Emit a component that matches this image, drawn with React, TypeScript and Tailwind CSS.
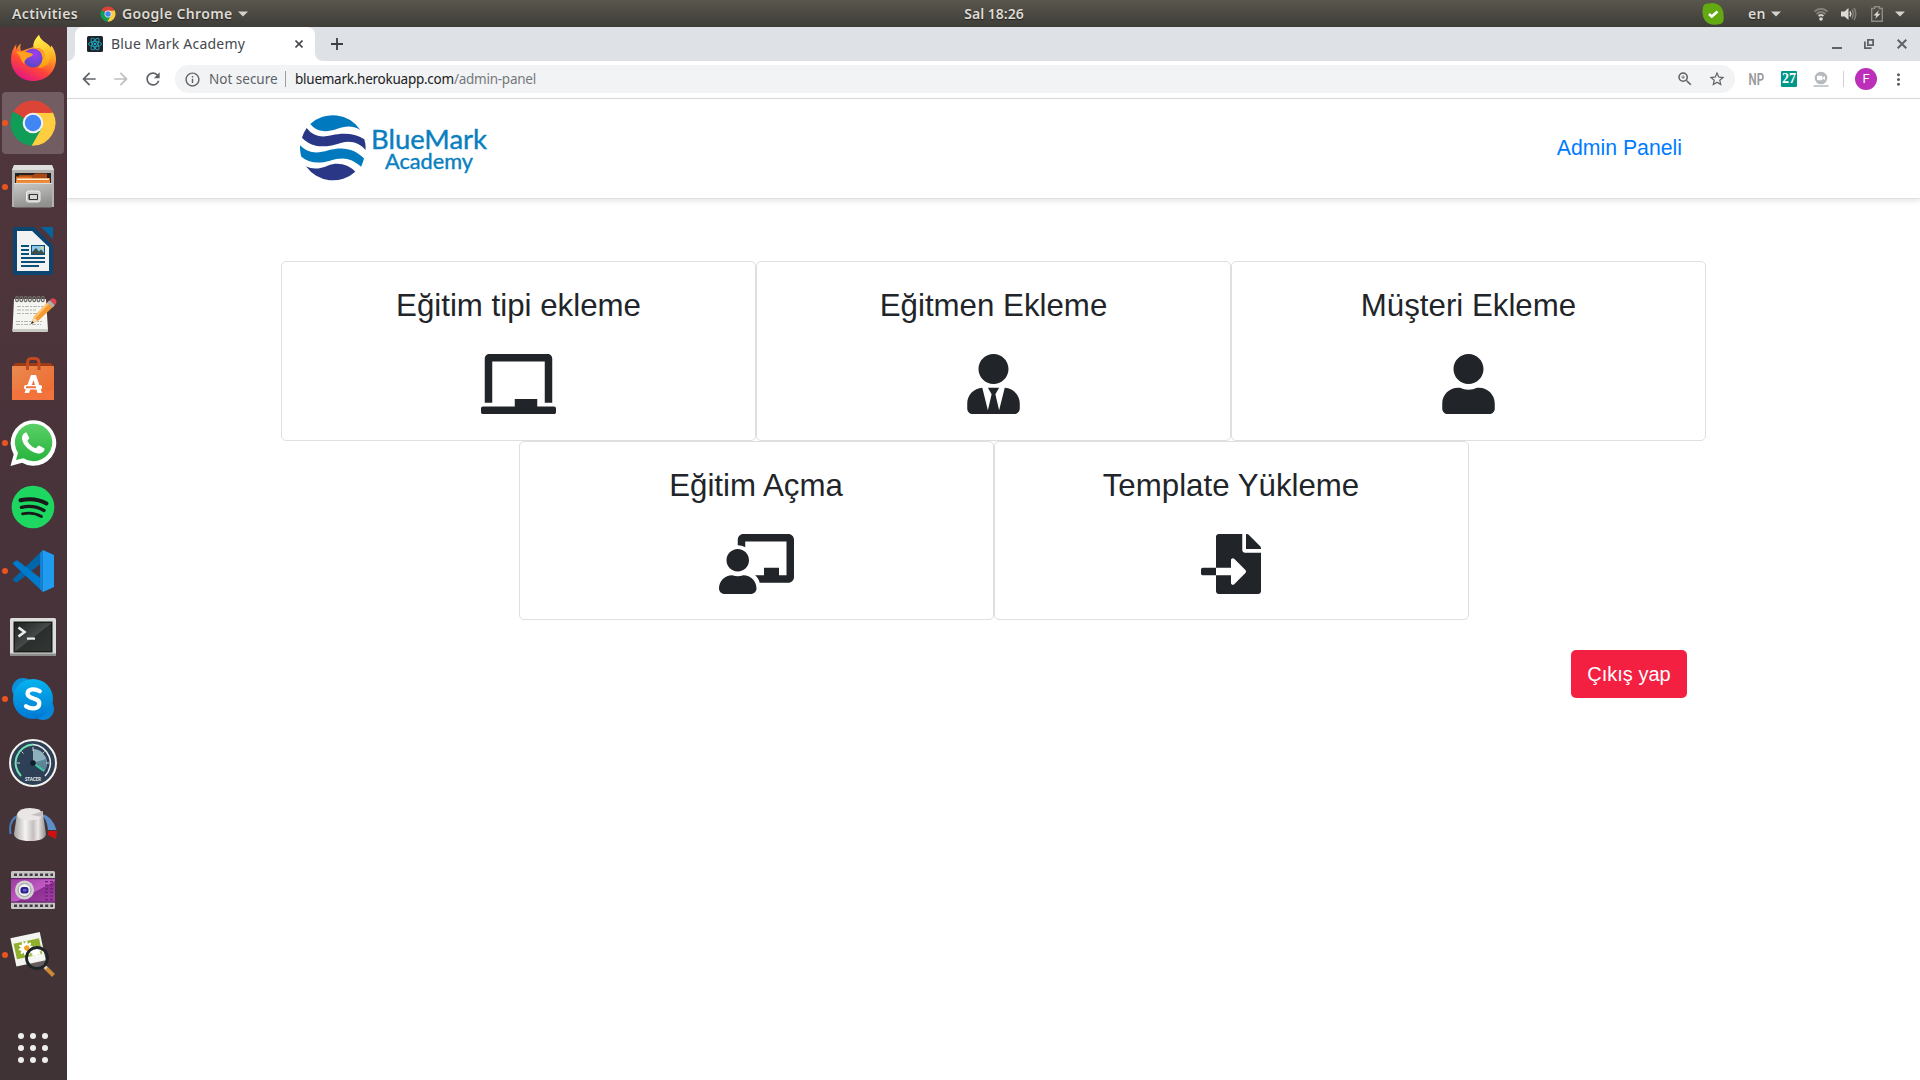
import React from "react";
import { FaChalkboard, FaUserTie, FaUser, FaChalkboardTeacher, FaFileImport } from "react-icons/fa";
import { MdArrowBack, MdArrowForward, MdRefresh, MdInfoOutline, MdZoomIn, MdStarBorder, MdMoreVert } from "react-icons/md";

const ChromeLogo = ({ className }: { className: string }) => (
  <svg viewBox="0 0 48 48" className={className}>
    <path d="M24 24 L4.5 12.7 A22.5 22.5 0 0 1 43.5 13 Z" fill="#db4437" />
    <path d="M24 24 L43.5 13 A22.5 22.5 0 0 1 23 46.5 Z" fill="#ffcd40" />
    <path d="M24 24 L23 46.5 A22.5 22.5 0 0 1 4.5 12.7 Z" fill="#0f9d58" />
    <path d="M24 13.7 H43.8 L45 17 L24 24Z" fill="#ffcd40" />
    <path d="M24 13.7 H43.8 L41 9.5 L12 8 L14 20Z" fill="#db4437" />
    <path d="M33 29 L23 46.5 L16 45 L18 29Z" fill="#0f9d58" />
    <path d="M33 29 L23 46.5 L30 45.8 L42 34 L40 16Z" fill="#ffcd40" />
    <path d="M15 29.5 L4.8 12.5 L2 18 L3 32 L17 34Z" fill="#0f9d58" />
    <circle cx="24" cy="24" r="10.3" fill="#f1f1f1" />
    <circle cx="24" cy="24" r="8.2" fill="#4285f4" />
  </svg>
);

const Firefox = () => (
  <>
    <defs>
      <linearGradient id="ffo" x1="0.8" y1="0" x2="0.3" y2="1">
        <stop offset="0" stopColor="#fff44f" />
        <stop offset="0.35" stopColor="#ffa422" />
        <stop offset="0.68" stopColor="#ff4538" />
        <stop offset="1" stopColor="#e31587" />
      </linearGradient>
      <linearGradient id="ffy" x1="0.5" y1="0" x2="0.6" y2="1">
        <stop offset="0" stopColor="#fff44f" />
        <stop offset="1" stopColor="#ff980e" />
      </linearGradient>
      <radialGradient id="ffp" cx="0.6" cy="0.3" r="0.8">
        <stop offset="0" stopColor="#a13df0" />
        <stop offset="1" stopColor="#4a4bbd" />
      </radialGradient>
    </defs>
    <path d="M30 0 C26 4 24 8 24.5 12 L12 16 C11 13 11 11 12 8.500 C9.500 10 8.500 12 7.500 14.500 C7 13 7 11 7.500 9 C4 13 2 18 2 24 C2 37 12 46 24 46 C37 46 47 37 47 24 C47 19 45 13 42 10.500 L42 13 C40 8 31 6 30 0Z" fill="url(#ffo)" />
    <path d="M30 0 C26 4 24 8 24.500 12 C34 15 37 25 29 33 C40 33 43 25 42 13 C38 8 31 6 30 0Z" fill="url(#ffy)" />
    <circle cx="24" cy="23" r="9.500" fill="url(#ffp)" />
    <path d="M7 17 C12 15 19 17 24 19 C23 22 20 22 18 23 C17 25 15 25 15.500 29 C11 26 13 22 7 17Z" fill="#ffa021" />
    <path d="M24.500 13.500 C29 13 35 17 34 25 C39 20 34 11 24.500 13.500Z" fill="#ff9a22" />
  </>
);

const Files = () => (
  <>
    <defs>
      <linearGradient id="fl" x1="0" y1="0" x2="0.3" y2="1">
        <stop offset="0" stopColor="#c9c9c7" />
        <stop offset="1" stopColor="#91918f" />
      </linearGradient>
    </defs>
    <path d="M5 2 H43 L45 7 V44 H3 V7Z" fill="#b3b2b0" />
    <path d="M5 2 H43 L45 7 H3Z" fill="#dededc" />
    <rect x="6" y="10" width="36" height="12" fill="#26211d" />
    <path d="M10 12 H24 L26 10.500 H38 V22 H10Z" fill="#a94a16" />
    <path d="M7 13.500 H22 L24 15 H41 V22 H7Z" fill="#e06c1f" />
    <rect x="8" y="15.500" width="32" height="1.500" fill="#fff0d8" />
    <rect x="7" y="17.500" width="34" height="4" fill="#ee8d3c" />
    <rect x="5" y="20" width="38" height="24.500" rx="1" fill="url(#fl)" />
    <rect x="5" y="20" width="38" height="1" fill="#dcdcda" />
    <rect x="17.500" y="28" width="13.500" height="11" rx="2" fill="#cfcfcd" stroke="#eee" />
    <rect x="19.500" y="31" width="9.500" height="6" rx="1" fill="#333" />
    <rect x="21" y="32" width="7" height="4" fill="#d7d7d7" />
  </>
);

const Writer = () => (
  <>
    <path d="M6 0 H25 L44 19 V46 Q44 48 42 48 H6 Q4 48 4 46 V2 Q4 0 6 0Z" fill="#0c4670" />
    <path d="M32 0 H44 V12Z" fill="#04649c" />
    <path d="M8 4 H24 L40 19 V44 H8Z" fill="#f2f2f2" />
    <path d="M25 0 L44 19 V24 L22 3Z" fill="#0c4670" />
    <g fill="#0b5079">
      <rect x="12" y="18" width="8" height="2" />
      <rect x="12" y="22" width="8" height="2" />
      <rect x="12" y="26" width="8" height="2" />
      <rect x="12" y="30" width="24" height="2" />
      <rect x="12" y="34" width="24" height="2" />
      <rect x="12" y="38" width="18" height="2" />
      <rect x="22" y="18" width="14" height="10" />
    </g>
    <rect x="23" y="19" width="12" height="8" fill="#8cc8ee" />
    <path d="M23 27 V25 L27 21 L30 24.500 L32 22.500 L35 26 V27Z" fill="#3d4f4a" />
    <circle cx="33" cy="21" r="1.200" fill="#f5e13c" />
  </>
);

const Notes = () => (
  <>
    <path d="M5 8 H37 L39 39 Q39 41 37 41 H5 Q3 41 3.500 39Z" fill="#f4f4f0" />
    <path d="M3.500 38 H39 V40 Q39 41 37 41 H5 Q3.500 41 3.500 40Z" fill="#c9cac3" />
    <g stroke="#b0b0aa" strokeWidth="0.900" strokeDasharray="4 1 2 1">
      <path d="M8 15.500 H34" /><path d="M8 19 H27" /><path d="M8 22.500 H30" /><path d="M7 30.500 H33" /><path d="M7 33.500 H32" />
    </g>
    <g fill="none" stroke="#6c6c68" strokeWidth="1.200">
      {[8, 12.300, 16.600, 20.900, 25.200, 29.500, 33.800].map((x) => (
        <ellipse key={x} cx={x} cy="8" rx="1.400" ry="2.600" />
      ))}
    </g>
    <path d="M22 33 L24.500 26 L40 10 L45 15 L29 30Z" fill="#f39a32" />
    <path d="M24.500 26 L40 10 L41.500 11.500 L26 27.500Z" fill="#ffc36a" />
    <path d="M22 33 L24.500 26 L29 30Z" fill="#f1d9ad" />
    <path d="M22 33 L23 30 L25 31.800Z" fill="#222" />
    <path d="M38.500 11.500 L41 9 L46 14 L43.500 16.500Z" fill="#a9adb0" />
    <path d="M41 9 Q43 6 46 8 Q49 10.500 46 14Z" fill="#e0454d" />
  </>
);

const Software = () => (
  <>
    <defs>
      <linearGradient id="sw" x1="0" y1="0" x2="1" y2="1">
        <stop offset="0" stopColor="#e98a50" />
        <stop offset="1" stopColor="#f0672c" />
      </linearGradient>
    </defs>
    <path d="M6 8 H42 L45 12 H3Z" fill="#9c3b16" />
    <rect x="3" y="11" width="42" height="34" fill="url(#sw)" />
    <rect x="3" y="35" width="42" height="10" fill="#f2743c" />
    <path d="M18.500 15 V8 Q18.500 3.500 22.500 3.500 H26 Q30 3.500 30 8 V15" fill="none" stroke="#c4491f" strokeWidth="3" />
    <path d="M22 20 H27 L33 38 H28.500 L24.500 25 L20 38 H15.500Z" fill="#fff" />
    <rect x="15" y="30" width="18" height="4.500" rx="2" fill="#fff" />
    <rect x="17" y="31.200" width="10" height="2" rx="0.500" fill="#ee7340" />
  </>
);

const Whatsapp = () => (
  <>
    <defs>
      <linearGradient id="wa" x1="0" y1="0" x2="0" y2="1">
        <stop offset="0" stopColor="#5bd066" />
        <stop offset="1" stopColor="#27b43e" />
      </linearGradient>
    </defs>
    <path d="M1.500 47 L4.700 35.500 A22.800 22.800 0 1 1 13 43.800Z" fill="#fff" />
    <path d="M7 41 L9 33.800 A18.700 18.700 0 1 1 14.500 39.200Z" fill="url(#wa)" />
    <path d="M17.500 13.500 C16 13 13 15.500 13 19 C13 26 23 34.500 30 34.500 C33 34.500 36 32 35.500 29.500 L30 26.500 C29 26.500 27.500 29.500 26.500 29.200 C23.500 28.500 19 24 18.500 22 C18.500 21 20.500 20 20.300 19Z" fill="#fff" />
  </>
);

const Spotify = () => (
  <>
    <circle cx="24" cy="24" r="21.300" fill="#1ed760" />
    <g fill="none" stroke="#17191a" strokeLinecap="round">
      <path d="M11.500 17.300 Q26 14 37.500 20.500" strokeWidth="4" />
      <path d="M12.500 24.300 Q25 21.500 35 27.500" strokeWidth="3.400" />
      <path d="M13.500 30.800 Q24 28.500 32.500 33.500" strokeWidth="2.800" />
    </g>
  </>
);

const VSCode = () => (
  <>
    <path d="M3.500 32.500 L34 3 V15 L8.500 35 Q6 36 3.500 32.500Z" fill="#0065a9" />
    <path d="M3.500 16.500 Q6 13 8.500 13.500 L34 33 V45 L3.500 16.500Z" fill="#007acc" />
    <path d="M34 3 L45 8 V40 L34 45 Z" fill="#1f9cf0" />
    <path d="M34 3 L31 6 V42 L34 45Z" fill="#1580d0" />
  </>
);

const Terminal = () => (
  <>
    <defs>
      <linearGradient id="tm" x1="0" y1="0" x2="1" y2="1">
        <stop offset="0" stopColor="#1e2321" />
        <stop offset="0.5" stopColor="#464a48" />
        <stop offset="0.52" stopColor="#2a2e2c" />
        <stop offset="1" stopColor="#323634" />
      </linearGradient>
    </defs>
    <rect x="1" y="7" width="46" height="38" rx="1.500" fill="#dcdcda" />
    <rect x="1" y="42.500" width="46" height="2.500" fill="#8d8d8b" />
    <rect x="4.500" y="10.500" width="39" height="31" fill="#191c1b" />
    <rect x="6" y="12" width="36" height="28" fill="url(#tm)" />
    <path d="M9.500 16.500 L15.500 21 L9.500 25.500" fill="none" stroke="#eee" strokeWidth="2.600" />
    <rect x="18" y="26.500" width="8" height="2.200" fill="#eee" />
  </>
);

const Skype = () => (
  <>
    <defs>
      <linearGradient id="sk" x1="0" y1="0" x2="0" y2="1">
        <stop offset="0" stopColor="#06b4ee" />
        <stop offset="1" stopColor="#0078d4" />
      </linearGradient>
    </defs>
    <circle cx="14" cy="14" r="11" fill="#0c8fd9" />
    <circle cx="34" cy="34" r="11" fill="#0b86d8" />
    <circle cx="24" cy="24" r="20" fill="url(#sk)" />
    <path d="M30.800 16.200 C26 13.300 19 13.500 18.500 18.300 C18.300 25 31 22 30.300 28.700 C29.800 34.500 21.500 34.300 17 31.200" fill="none" stroke="#fff" strokeWidth="4.200" strokeLinecap="round" />
  </>
);

const Stacer = () => (
  <>
    <circle cx="24" cy="24" r="23" fill="#2d4055" stroke="#f3f3f0" strokeWidth="2" />
    <path d="M24 24 V10 A14 14 0 0 1 35 32.500Z" fill="#8fb0bd" />
    <path d="M24 24 L37 20 A14 14 0 0 1 35 32.500Z" fill="#5d8598" />
    <path d="M12 37 A18.500 18.500 0 0 1 24 5.500" fill="none" stroke="#73e0b4" strokeWidth="2" />
    <path d="M24 5.500 A18.500 18.500 0 0 1 36 37" fill="none" stroke="#e9edf0" strokeWidth="1.600" />
    <path d="M24 24 L35 32" stroke="#3cc9a4" strokeWidth="2" />
    <g stroke="#cdd6dc" strokeWidth="1">
      <path d="M24 8 V12" /><path d="M8 24 H11" /><path d="M37 24 H40" /><path d="M12.500 12.500 L14.500 14.500" /><path d="M35.500 12.500 L33.500 14.500" />
    </g>
    <circle cx="24" cy="24" r="2.800" fill="#101d2d" />
    <text x="24" y="41.500" fontSize="4.500" fontWeight="700" fill="#e5e8ea" textAnchor="middle" textLength="16" fontFamily="Open Sans">STACER</text>
  </>
);

const Knob = () => (
  <>
    <defs>
      <linearGradient id="kn" x1="0" y1="0" x2="1" y2="0">
        <stop offset="0" stopColor="#a5a3a2" />
        <stop offset="0.35" stopColor="#f6f4f3" />
        <stop offset="0.6" stopColor="#c4bfbe" />
        <stop offset="0.75" stopColor="#eeeae9" />
        <stop offset="1" stopColor="#8d8988" />
      </linearGradient>
    </defs>
    <path d="M1.500 31 Q-1 17 10 12" fill="none" stroke="#4b7dbb" strokeWidth="2" />
    <path d="M33 11 Q43 13 47.500 27 L39 27 Q38 16 33 13Z" fill="#5c8fca" />
    <path d="M39 28 L48 28 L47 36 L39 32Z" fill="#cf1010" />
    <path d="M8 11 Q10 5 21 5 Q32 5 34 11 L37 31 Q36 38 21 38 Q6 38 5 31Z" fill="url(#kn)" />
    <ellipse cx="21" cy="11.500" rx="12.500" ry="6" fill="#e9e6e5" />
    <path d="M22 12 L34 8 L34 14Z" fill="#c3bfbe" />
  </>
);

const Film = () => (
  <>
    <defs>
      <linearGradient id="fm" x1="0" y1="0" x2="1" y2="1">
        <stop offset="0" stopColor="#9b3ba0" />
        <stop offset="0.55" stopColor="#c25ac5" />
        <stop offset="0.56" stopColor="#8c2f93" />
        <stop offset="1" stopColor="#a43fa9" />
      </linearGradient>
    </defs>
    <rect x="2" y="4" width="44" height="38" rx="1.500" fill="#c6c6c4" />
    <rect x="2" y="11.500" width="44" height="23.500" fill="url(#fm)" />
    <rect x="2" y="11" width="44" height="1.200" fill="#5e2264" />
    <rect x="2" y="34.500" width="44" height="1.200" fill="#5e2264" />
    <path d="M5 7.800 H44" stroke="#413942" strokeWidth="2.400" strokeDasharray="3 2.200" />
    <path d="M5 38.800 H44" stroke="#413942" strokeWidth="2.400" strokeDasharray="3 2.200" />
    <circle cx="15.500" cy="23" r="9.500" fill="#d2d2d2" />
    <circle cx="15.500" cy="23" r="6.500" fill="#f0f0f0" stroke="#9a9a9a" />
    <rect x="11.500" y="20" width="8" height="6.500" rx="2.500" fill="#312186" />
    <rect x="14" y="22" width="3.500" height="2.500" fill="#5b62e0" />
    <path d="M37.500 14 V34 M42.500 14 V34" stroke="#6a1f72" strokeWidth="3" strokeDasharray="1.200 2.400" />
  </>
);

const PhotoViewer = () => (
  <>
    <g transform="rotate(-12 18 18)">
      <rect x="4" y="4" width="30" height="29" fill="#f3f3ef" />
      <rect x="6" y="10" width="26" height="16" fill="#90b02c" />
      <g fill="#fff">
        {[0, 36, 72, 108, 144].map((a) => (
          <ellipse key={a} cx="17" cy="17" rx="7.500" ry="1.900" transform={`rotate(${a} 17 17)`} />
        ))}
        {[0, 45, 90, 135].map((a) => (
          <ellipse key={a} cx="26" cy="22" rx="5.500" ry="1.800" transform={`rotate(${a} 26 22)`} />
        ))}
      </g>
      <circle cx="18" cy="17" r="2.700" fill="#f0a21d" />
    </g>
    <path d="M36 36 L44.500 44.500" stroke="#c98a35" strokeWidth="4" />
    <path d="M34 34 L37.500 37.500" stroke="#d8d8d8" strokeWidth="3" />
    <circle cx="28" cy="27" r="10.500" fill="#ffffff" fillOpacity="0.200" stroke="#1f2427" strokeWidth="2.800" />
    <path d="M24 23 Q28 20 32 24" stroke="#fff" strokeOpacity="0.500" fill="none" />
  </>
);

const dock: { icon: React.ReactNode; running?: boolean; active?: boolean }[] = [
  { icon: <Firefox /> },
  { icon: null, running: true, active: true },
  { icon: <Files />, running: true },
  { icon: <Writer /> },
  { icon: <Notes /> },
  { icon: <Software /> },
  { icon: <Whatsapp />, running: true },
  { icon: <Spotify /> },
  { icon: <VSCode />, running: true },
  { icon: <Terminal /> },
  { icon: <Skype />, running: true },
  { icon: <Stacer /> },
  { icon: <Knob /> },
  { icon: <Film /> },
  { icon: <PhotoViewer />, running: true },
];

const Dock = () => (
  <aside className="flex w-[67px] shrink-0 flex-col bg-linear-to-b from-[#50363b] via-[#48333a] to-[#403335]">
    {dock.map((d, i) => (
      <div key={i} className="flex h-16 items-center">
        <div className={`ml-0.5 flex h-[62px] w-[62px] items-center rounded ${d.active ? "bg-white/20" : ""}`}>
          <span className={`h-1.5 w-1.5 shrink-0 rounded-full ${d.running ? "bg-[#e95420]" : ""}`} />
          {d.icon ? (
            <svg viewBox="0 0 48 48" className="ml-px h-12 w-12 shrink-0">{d.icon}</svg>
          ) : (
            <ChromeLogo className="ml-px h-12 w-12 shrink-0" />
          )}
        </div>
      </div>
    ))}
    <div className="mt-auto mb-[17px] ml-[18px] grid w-[30px] grid-cols-3 gap-1.5">
      {Array.from({ length: 9 }, (_, i) => (
        <span key={i} className="h-1.5 w-1.5 rounded-full bg-[#eeeeec]" />
      ))}
    </div>
  </aside>
);

const Caret = ({ className }: { className: string }) => (
  <svg viewBox="0 0 10 6" className={`h-1.5 w-2.5 shrink-0 ${className}`}><path d="M0 0.500H10L5 5.500Z" fill="#d3d2cc" /></svg>
);

const TopBar = () => (
  <div className="flex h-[27px] shrink-0 items-center bg-linear-to-b from-[#59564d] to-[#3e3d38] font-['Noto_Sans','Open_Sans',sans-serif] text-[14px] font-semibold tracking-[0.35px] text-[#dfdbd2] [text-shadow:0_1px_1px_#222]">
    <div className="flex w-[962px] shrink-0 items-center">
      <span className="ml-3 w-[88px] whitespace-nowrap">Activities</span>
      <ChromeLogo className="h-4 w-4 shrink-0" />
      <span className="ml-1.5 w-[116px] whitespace-nowrap">Google Chrome</span>
      <Caret className="" />
    </div>
    <span className="w-[64px] whitespace-nowrap text-center tracking-normal">Sal 18:26</span>
    <div className="flex flex-1 items-center justify-end pr-[15px]">
      <svg viewBox="0 0 22 22" className="h-[22px] w-[22px]">
        <path d="M1 4 Q2 0 7 0.500 Q12 -1 17 2 Q22 6 21.500 13 Q23 22 15 21.500 Q8 23 3 17.500 Q0 13 0.500 8Z" fill="#62a912" />
        <path d="M7 11 L9.800 13.500 L15.500 8.500" fill="none" stroke="#fff" strokeWidth="2.600" />
      </svg>
      <span className="ml-6 w-[23px]">en</span>
      <Caret className="mr-[33px]" />
      <svg viewBox="0 0 14 14" className="h-3.5 w-3.5" fill="none" strokeWidth="1.800">
        <path d="M0.500 4.500 Q7 -1 13.500 4.500" stroke="#83817b" />
        <path d="M2.500 7 Q7 3 11.500 7" stroke="#83817b" />
        <path d="M4.500 9 Q7 7 9.500 9" stroke="#cfcdc6" />
        <circle cx="7" cy="12" r="1.800" fill="#dfdbd2" />
      </svg>
      <svg viewBox="0 0 16 14" className="ml-[13px] h-3.5 w-4" fill="none" strokeWidth="1.500">
        <path d="M0 4.500 H3.500 L7.500 1 V13 L3.500 9.500 H0Z" fill="#dfdbd2" />
        <path d="M9 4.500 Q10.500 7 9 9.500" stroke="#dfdbd2" />
        <path d="M11 2.500 Q13.500 7 11 11.500 M13 1 Q16.500 7 13 13" stroke="#83817b" />
      </svg>
      <svg viewBox="0 0 12 16" className="ml-[14px] h-4 w-3">
        <path d="M3.500 2.500 V0.700 H8.500 V2.500 H11.300 V15.300 H0.700 V2.500Z" fill="none" stroke="#8d8b85" strokeWidth="1.400" />
        <path d="M8 4 L2.500 9.500 H5.500 L4 13 L9.500 7.800 H6.500Z" fill="#dfdbd2" />
      </svg>
      <Caret className="ml-3" />
    </div>
  </div>
);

const TabStrip = () => (
  <div className="flex h-[34px] shrink-0 items-center bg-[#dee1e6] text-[#5f6368]">
    <div className="h-2 w-2 self-end bg-white"><div className="h-2 w-2 rounded-br-lg bg-[#dee1e6]" /></div>
    <div className="flex h-full w-[240px] items-center rounded-t-lg bg-white pl-3">
      <svg viewBox="0 0 16 16" className="h-4 w-4">
        <rect width="16" height="16" rx="1.500" fill="#20232a" />
        <g fill="none" stroke="#1fa7c0" strokeWidth="0.900">
          <ellipse cx="8" cy="8" rx="6.500" ry="2.500" />
          <ellipse cx="8" cy="8" rx="6.500" ry="2.500" transform="rotate(60 8 8)" />
          <ellipse cx="8" cy="8" rx="6.500" ry="2.500" transform="rotate(120 8 8)" />
        </g>
        <circle cx="8" cy="8" r="1.300" fill="#1fa7c0" />
      </svg>
      <span className="ml-2 w-[184px] whitespace-nowrap pb-0.5 font-['Noto_Sans',sans-serif] text-[14px] tracking-[0.2px] text-[#45484c]">Blue Mark Academy</span>
      <svg viewBox="0 0 8 8" className="h-2 w-2"><path d="M0.500 0.500L7.500 7.500M7.500 0.500L0.500 7.500" stroke="#45484c" strokeWidth="1.600" /></svg>
    </div>
    <div className="h-2 w-2 self-end bg-white"><div className="h-2 w-2 rounded-bl-lg bg-[#dee1e6]" /></div>
    <svg viewBox="0 0 12 12" className="ml-2 h-3 w-3"><path d="M6 0V12M0 6H12" stroke="#3c4043" strokeWidth="1.800" /></svg>
    <div className="ml-auto mr-[13px] flex items-center">
      <svg viewBox="0 0 10 10" className="h-2.5 w-2.5"><path d="M0 9H10" stroke="#5f6368" strokeWidth="2" /></svg>
      <svg viewBox="0 0 10 10" className="ml-[22px] h-2.5 w-2.5" fill="none" stroke="#5f6368" strokeWidth="1.800"><path d="M3.900 0.900H9.100V6.100H3.900Z M0.900 2.500V9.100H7.500" /></svg>
      <svg viewBox="0 0 10 10" className="ml-[23px] h-2.5 w-2.5"><path d="M0.700 0.700L9.300 9.300M9.300 0.700L0.700 9.300" stroke="#5f6368" strokeWidth="2" /></svg>
    </div>
  </div>
);

const Toolbar = () => (
  <div className="flex h-[38px] shrink-0 items-center border-b border-[#dadce0] bg-white pb-px font-['Noto_Sans',sans-serif] text-[13.5px] text-[#5f6368]">
    <MdArrowBack className="ml-3 h-5 w-5" />
    <MdArrowForward className="ml-3 h-5 w-5 text-[#bcbec1]" />
    <MdRefresh className="ml-3 h-5 w-5" />
    <div className="ml-3 flex h-7 w-[1560px] items-center rounded-full bg-[#f1f3f4] pl-[9px]">
      <MdInfoOutline className="h-[17px] w-[17px]" />
      <span className="ml-2 w-[76px] whitespace-nowrap">Not secure</span>
      <span className="h-4 w-px bg-[#9aa0a6]" />
      <span className="ml-[9px] whitespace-nowrap tracking-[-0.25px] text-[#202124]">bluemark.herokuapp.com<span className="text-[#75797e]">/admin-panel</span></span>
      <MdZoomIn className="ml-auto h-[18px] w-[18px]" />
      <MdStarBorder className="ml-3.5 mr-[9px] h-[18px] w-[18px]" />
    </div>
    <svg viewBox="0 0 18 24" className="ml-[13px] h-6 w-[18px]"><text x="0.500" y="18" textLength="15.500" lengthAdjust="spacingAndGlyphs" fontSize="17" fontWeight="600" fill="#999" fontFamily="Roboto">NP</text></svg>
    <svg viewBox="0 0 16 16" className="ml-[15px] h-4 w-4">
      <rect width="16" height="16" rx="1" fill="#00978a" />
      <text x="1" y="12" textLength="14" lengthAdjust="spacingAndGlyphs" fontSize="14" fontWeight="700" fill="#fff" fontFamily="Liberation Serif">27</text>
    </svg>
    <svg viewBox="0 0 16 16" className="ml-4 h-4 w-4">
      <circle cx="8" cy="7" r="6.300" fill="#b6babe" />
      <rect x="4" y="4.800" width="5.500" height="4.500" rx="0.700" fill="#fff" />
      <path d="M10 6.500L12 5V9L10 7.800Z" fill="#fff" />
      <path d="M0.500 15H15.500" stroke="#b6babe" strokeWidth="1.500" />
    </svg>
    <span className="ml-3.5 h-4 w-px bg-[#cfd1d4]" />
    <span className="ml-[11px] flex h-[22px] w-[22px] items-center justify-center rounded-full bg-[#bb2fb9] font-[Roboto,sans-serif] text-[13px] text-white">F</span>
    <MdMoreVert className="ml-3 h-[19px] w-[19px]" />
  </div>
);

const Logo = () => (
  <svg viewBox="0 0 190 66" className="h-[66px] w-[190px]">
    <g transform="scale(0.33333) translate(-60 -60)">
      <path d="M91 87 A99 99 0 0 1 241 105 C215 90 195 94 170 102 C138 113 110 111 91 87Z" fill="#0079bf" />
      <path d="M80 99 C100 125 125 128 155 121 C190 113 225 115 253 133 Q258 148 257 165 C240 145 215 135 185 143 C140 157 100 163 66 128 Q71 112 80 99Z" fill="#293786" />
      <path d="M60 151 C85 175 110 177 145 166 C190 153 225 162 252 190 Q249 204 243 215 C215 190 190 184 150 197 C115 207 90 205 64 185 Q59 168 60 151Z" fill="#0079bf" />
      <path d="M78 214 C100 225 120 221 143 212 C175 200 205 209 226 230 A99 99 0 0 1 78 214Z" fill="#293786" />
    </g>
    <g fill="#0a7fc0" stroke="#0a7fc0" strokeWidth="0.400" fontFamily="Lato, sans-serif">
      <text x="71" y="34" fontSize="27.500" textLength="116" lengthAdjust="spacingAndGlyphs">BlueMark</text>
      <text x="85" y="54" fontSize="21.500" textLength="88" lengthAdjust="spacingAndGlyphs">Academy</text>
    </g>
  </svg>
);

const Card = ({ title, children }: { title: string; children: React.ReactNode }) => (
  <div className="flex h-[179.5px] w-[475px] flex-col items-center rounded-[5px] border border-[#dfdfdf] bg-white pt-[25px]">
    <h2 className="text-[31.25px] leading-[37.5px]">{title}</h2>
    <div className="mt-[29.5px]">{children}</div>
  </div>
);

export default function App() {
  return (
    <div className="flex h-[1080px] w-[1920px] flex-col overflow-hidden bg-white">
      <TopBar />
      <div className="flex min-h-0 flex-1">
        <Dock />
        <div className="flex min-w-0 flex-1 flex-col">
          <TabStrip />
          <Toolbar />
          <main className="flex flex-1 flex-col bg-white font-['Liberation_Sans',sans-serif] text-[#212529]">
            <header className="flex h-[100px] shrink-0 items-center justify-between border-b border-[#dee2e6] pr-[238px] pb-[2px] pl-[233px] shadow-[0_2px_5px_rgba(0,0,0,0.1)]">
              <Logo />
              <a className="text-[21.25px] leading-8 text-[#007bff]">Admin Paneli</a>
            </header>
            <section className="mx-auto mt-[62px] flex w-[1425px] flex-wrap justify-center">
              <Card title="Eğitim tipi ekleme"><FaChalkboard className="h-[60px] w-[75px]" /></Card>
              <Card title="Eğitmen Ekleme"><FaUserTie className="h-[60px] w-[53px]" /></Card>
              <Card title="Müşteri Ekleme"><FaUser className="h-[60px] w-[53px]" /></Card>
              <Card title="Eğitim Açma"><FaChalkboardTeacher className="h-[60px] w-[75px]" /></Card>
              <Card title="Template Yükleme"><FaFileImport className="h-[60px] w-[60px]" /></Card>
            </section>
            <div className="mx-auto mt-[30px] flex w-[1425px] justify-end pr-[19px]">
              <button className="h-12 w-[116px] rounded-[5px] bg-[#f32042] text-[20px] text-white">Çıkış yap</button>
            </div>
          </main>
        </div>
      </div>
    </div>
  );
}
